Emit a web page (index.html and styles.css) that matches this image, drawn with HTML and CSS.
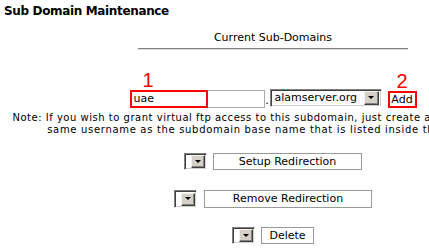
FILE: index.html
```html
<!DOCTYPE html>
<html>
<head>
<meta charset="utf-8">
<link rel="stylesheet" href="styles.css">
</head>
<body>
<div class="page">
  <h1 class="title">Sub Domain Maintenance</h1>
  <div class="current">Current Sub-Domains</div>
  <div class="rule"></div>
  <div class="addrow">
    <div class="field">uae<span class="mark"></span><span class="num num-1">1</span></div>
    <span class="dot">.</span>
    <div class="select"><span class="select-text">alamserver.org</span><span class="arrowbtn"><span class="tri"></span></span></div>
    <div class="add">Add<span class="num num-2">2</span></div>
  </div>
  <p class="note"><span class="note-l1">Note: If you wish to grant virtual ftp access to this subdomain, just create an account with the</span><br><span class="note-l2">same username as the subdomain base name that is listed inside the listboxes.</span></p>
  <div class="actrow row-setup">
    <div class="dd"><span class="arrowbtn"><span class="tri"></span></span></div>
    <div class="btn btn-setup">Setup Redirection</div>
  </div>
  <div class="actrow row-remove">
    <div class="dd"><span class="arrowbtn"><span class="tri"></span></span></div>
    <div class="btn btn-remove">Remove Redirection</div>
  </div>
  <div class="actrow row-delete">
    <div class="dd"><span class="arrowbtn"><span class="tri"></span></span></div>
    <div class="btn btn-delete">Delete</div>
  </div>
</div>
</body>
</html>
```
FILE: styles.css
```css
html { overflow: hidden; background: #fff; }
body {
  margin: 0;
  font-family: "DejaVu Sans", Verdana, sans-serif;
  color: #000;
}
.page {
  width: 546px;
}
.title {
  margin: 0;
  padding: 4px 0 0 4px;
  font-size: 12px;
  line-height: 14px;
  font-weight: bold;
  letter-spacing: -0.35px;
}
.current {
  margin-top: 13px;
  text-align: center;
  font-size: 11px;
  line-height: 13px;
}
.rule {
  width: 270px;
  margin: 4px auto 0;
  border-top: 1px solid #808080;
  border-bottom: 1px solid #dcdcdc;
}
.addrow {
  display: flex;
  justify-content: center;
  align-items: flex-start;
  margin-top: 39px;
  font-size: 11px;
}
.field {
  position: relative;
  box-sizing: border-box;
  width: 135px;
  height: 18px;
  margin-top: 1px;
  padding-left: 3px;
  border: 1px solid #a5acb2;
  line-height: 16px;
}
.mark {
  position: absolute;
  left: -1px;
  top: -1px;
  width: 78px;
  height: 18px;
  box-sizing: border-box;
  border: 2px solid #f00;
}
.num {
  position: absolute;
  font-family: "Liberation Sans", Arial, sans-serif;
  font-size: 20px;
  line-height: 20px;
  color: #f00;
}
.num-1 { left: 12px; top: -21px; }
.num-2 { left: 7px; top: -22px; }
.dot {
  width: 5px;
  padding-top: 5px;
  line-height: 13px;
  text-align: center;
}
.select {
  box-sizing: border-box;
  display: flex;
  align-items: center;
  justify-content: space-between;
  width: 112px;
  height: 18px;
  padding: 1px;
  border: 1px solid;
  border-color: #808080 #fff #fff #808080;
  box-shadow: inset 1px 1px #404040, inset -1px -1px #d4d0c8;
  padding-left: 4px;
}
.select-text { line-height: 14px; }
.arrowbtn {
  box-sizing: border-box;
  display: flex;
  align-items: center;
  justify-content: center;
  width: 15px;
  height: 14px;
  margin-right: 1px;
  background: #d4d0c8;
  border: 1px solid;
  border-color: #f4f3ee #404040 #404040 #f4f3ee;
  box-shadow: inset -1px -1px #808080;
}
.tri {
  width: 0;
  height: 0;
  border-left: 3px solid transparent;
  border-right: 3px solid transparent;
  border-top: 3px solid #000;
  margin-bottom: 1px;
}
.add {
  position: relative;
  box-sizing: border-box;
  width: 29px;
  height: 17px;
  margin-top: 2px;
  margin-left: 6px;
  border: 2px solid #f00;
  text-align: center;
  line-height: 13px;
}
.note {
  margin: 4px auto 0;
  width: 546px;
  text-align: center;
  font-size: 10px;
  line-height: 12px;
  white-space: nowrap;
}
.note-l1 { letter-spacing: 0.52px; }
.note-l2 { letter-spacing: 0.68px; }
.actrow {
  display: flex;
  justify-content: center;
  align-items: center;
  gap: 6px;
  font-size: 11px;
}
.row-setup { margin-top: 17px; }
.row-remove { margin-top: 20px; gap: 7px; }
.row-delete { margin-top: 19px; }
.dd {
  box-sizing: border-box;
  display: flex;
  align-items: center;
  justify-content: flex-end;
  width: 23px;
  height: 17px;
  padding: 1px;
  border: 1px solid;
  border-color: #808080 #fff #fff #808080;
  box-shadow: inset 1px 1px #404040, inset -1px -1px #d4d0c8;
}
.dd .arrowbtn { width: 14px; height: 13px; margin-right: 0; }
.btn {
  box-sizing: border-box;
  height: 17px;
  border: 1px solid #9a9a9a;
  background: #fff;
  text-align: center;
  line-height: 15px;
}
.btn-setup { width: 149px; }
.btn-remove { width: 168px; height: 18px; line-height: 16px; }
.row-remove .dd { height: 18px; }
.btn-delete { width: 53px; }
```
